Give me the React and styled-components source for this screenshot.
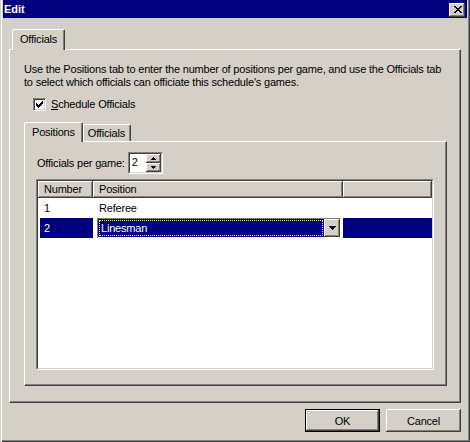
import React from "react";
import styled, { createGlobalStyle } from "styled-components";

const face = "#d4d0c8";
const shadow = "#808080";
const dark = "#404040";
const navy = "#000080";

const GlobalStyle = createGlobalStyle`
  html, body {
    margin: 0;
    padding: 0;
    background: ${face};
  }
  body {
    font-family: "Liberation Sans", Arial, sans-serif;
    font-size: 11px;
    letter-spacing: -0.2px;
    color: #000;
  }
`;

const raised = `
  box-shadow: inset -1px -1px ${dark}, inset 1px 1px #fff,
    inset -2px -2px ${shadow}, inset 2px 2px ${face};
`;

const Window = styled.div`
  width: 470px;
  height: 442px;
  box-sizing: border-box;
  padding: 0 3px 3px 3px;
  background: ${face};
  box-shadow: inset 1px 0 ${face}, inset 2px 0 #fff, inset -1px -1px ${dark},
    inset -2px -2px ${shadow};
  display: flex;
  flex-direction: column;
`;

const TitleBar = styled.div`
  height: 18px;
  flex: none;
  box-sizing: border-box;
  background: ${navy};
  color: #fff;
  display: flex;
  align-items: flex-end;
  justify-content: space-between;
  padding: 0 2px 1px 1px;
`;

const TitleText = styled.span`
  font-weight: bold;
  letter-spacing: 0;
  line-height: 13px;
  padding-bottom: 1px;
`;

const CloseButton = styled.div`
  width: 16px;
  height: 14px;
  background: ${face};
  ${raised}
  display: flex;
  align-items: center;
  justify-content: center;
  padding: 0 0 1px 1px;
  box-sizing: border-box;
`;

const Tabs = styled.div`
  display: flex;
  flex-direction: column;
  flex: ${(p) => (p.$grow ? 1 : "none")};
  margin: ${(p) => p.$margin || 0};
`;

const TabRow = styled.div`
  display: flex;
  align-items: flex-end;
  padding-left: ${(p) => p.$indent || 0}px;
`;

const Tab = styled.div`
  position: relative;
  z-index: ${(p) => (p.$active ? 1 : 0)};
  height: ${(p) => p.$h}px;
  margin-bottom: ${(p) => (p.$active ? -1 : 0)}px;
  padding: 0 ${(p) => (p.$active ? "7px 2px 7px" : "5px 0 4px")};
  box-sizing: border-box;
  background: ${face};
  border-top: 1px solid #fff;
  border-left: 1px solid #fff;
  border-right: 1px solid ${dark};
  box-shadow: inset -1px 0 ${shadow};
  border-radius: 2px 2px 0 0;
  display: flex;
  align-items: center;
  white-space: nowrap;
`;

const Panel = styled.div`
  flex: 1;
  display: flex;
  flex-direction: column;
  box-sizing: border-box;
  border-top: 1px solid #fff;
  border-left: 1px solid #fff;
  border-right: 1px solid ${dark};
  border-bottom: 1px solid ${dark};
  box-shadow: inset -1px -1px ${shadow};
  padding: ${(p) => p.$pad};
`;

const Intro = styled.p`
  margin: 0;
  line-height: 13px;
`;

const CheckRow = styled.label`
  display: flex;
  align-items: center;
  gap: 5px;
  margin: 9px 0 0 9px;
  line-height: 13px;
`;

const CheckBox = styled.span`
  width: 13px;
  height: 13px;
  box-sizing: border-box;
  border: 1px solid;
  border-color: ${shadow} #fff #fff ${shadow};
  box-shadow: inset 1px 1px ${dark}, inset -1px -1px ${face};
  background: #fff;
  display: flex;
  align-items: center;
  justify-content: center;
`;

const SpinRow = styled.div`
  display: flex;
  align-items: center;
  gap: 3px;
  padding-left: 1px;
`;

const SpinBox = styled.div`
  width: 35px;
  height: 22px;
  box-sizing: border-box;
  border: 1px solid;
  border-color: ${shadow} #fff #fff ${shadow};
  display: flex;
`;

const SpinInner = styled.div`
  flex: 1;
  display: flex;
  border: 1px solid;
  border-color: ${dark} ${face} ${face} ${dark};
  background: #fff;
`;

const SpinValue = styled.div`
  flex: 1;
  padding: 2px 0 0 2px;
  line-height: 13px;
`;

const SpinButtons = styled.div`
  width: 15px;
  display: flex;
  flex-direction: column;
`;

const SpinButton = styled.div`
  flex: 1;
  background: ${face};
  ${raised}
  display: flex;
  align-items: center;
  justify-content: center;
`;

const ListBox = styled.div`
  flex: 1;
  margin-top: 5px;
  display: flex;
  border: 1px solid;
  border-color: ${shadow} #fff #fff ${shadow};
`;

const ListView = styled.div`
  flex: 1;
  border: 1px solid;
  border-color: ${dark} ${face} ${face} ${dark};
  background: #fff;
`;

const columns = "55px 250px 1fr";

const HeaderRow = styled.div`
  display: grid;
  grid-template-columns: ${columns};
  height: 17px;
`;

const HeaderCell = styled.div`
  background: ${face};
  ${raised}
  padding: 0 6px;
  display: flex;
  align-items: center;
  line-height: 13px;
`;

const Row = styled.div`
  display: grid;
  grid-template-columns: ${columns};
  height: 20px;
`;

const Cell = styled.div`
  display: flex;
  align-items: center;
  padding: ${(p) => (p.$combo ? "0 2px 0 4px" : p.$selected && p.$first ? "0 4px" : "0 6px")};
  margin-left: ${(p) => (p.$selected && p.$first ? 2 : 0)}px;
  background: ${(p) => (p.$selected ? navy : "transparent")};
  color: ${(p) => (p.$selected ? "#fff" : "#000")};
`;

const Combo = styled.div`
  flex: 1;
  height: 20px;
  box-sizing: border-box;
  display: flex;
  border: 1px solid;
  border-color: ${shadow} #fff #fff ${shadow};
  background: ${navy};
`;

const ComboText = styled.div`
  flex: 1;
  margin: 1px;
  padding-left: 1px;
  border: 1px dotted #ffff00;
  color: #fff;
  display: flex;
  align-items: center;
`;

const ComboButton = styled.div`
  width: 16px;
  background: ${face};
  ${raised}
  display: flex;
  align-items: center;
  justify-content: center;
`;

const ButtonRow = styled.div`
  display: flex;
  justify-content: flex-end;
  gap: 6px;
  margin: 6px 6px 7px 0;
`;

const Button = styled.div`
  width: 75px;
  height: 23px;
  box-sizing: border-box;
  background: ${face};
  border: ${(p) => (p.$default ? "1px solid #000" : "none")};
  ${raised}
  display: flex;
  align-items: center;
  justify-content: center;
`;

const Pixels = ({ w, h, d }) => (
  <svg width={w} height={h} viewBox={`0 0 ${w} ${h}`} shapeRendering="crispEdges">
    <path d={d} fill="#000" />
  </svg>
);

const closeGlyph =
  "M0 0h2v1H0z M6 0h2v1H6z M1 1h2v1H1z M5 1h2v1H5z M2 2h4v1H2z M3 3h2v1H3z M2 4h4v1H2z M1 5h2v1H1z M5 5h2v1H5z M0 6h2v1H0z M6 6h2v1H6z";
const checkGlyph =
  "M6 0h1v1H6z M5 1h2v1H5z M0 2h1v1H0z M4 2h3v1H4z M0 3h2v1H0z M3 3h3v1H3z M0 4h5v1H0z M1 5h3v1H1z M2 6h1v1H2z";
const downArrow = "M0 0h7v1H0z M1 1h5v1H1z M2 2h3v1H2z M3 3h1v1H3z";
const spinUp = "M2 0h1v1H2z M1 1h3v1H1z M0 2h5v1H0z";
const spinDown = "M0 0h5v1H0z M1 1h3v1H1z M2 2h1v1H2z";

const positions = [
  { number: "1", name: "Referee" },
  { number: "2", name: "Linesman", selected: true },
];

export default function App() {
  return (
    <>
      <GlobalStyle />
      <Window>
        <TitleBar>
          <TitleText>Edit</TitleText>
          <CloseButton>
            <Pixels w={8} h={7} d={closeGlyph} />
          </CloseButton>
        </TitleBar>

        <Tabs $grow $margin="11px 6px 0 6px">
          <TabRow $indent={3}>
            <Tab $active $h={21}>Officials</Tab>
          </TabRow>
          <Panel $pad="13px 13px 16px 14px">
            <Intro>
              Use the Positions tab to enter the number of positions per game, and use the Officials tab
              <br />
              to select which officials can officiate this schedule's games.
            </Intro>
            <CheckRow>
              <CheckBox>
                <Pixels w={7} h={7} d={checkGlyph} />
              </CheckBox>
              <span>
                <u>S</u>chedule Officials
              </span>
            </CheckRow>

            <Tabs $grow $margin="11px 0 0 0">
              <TabRow>
                <Tab $active $h={20}>Positions</Tab>
                <Tab $h={17}>Officials</Tab>
              </TabRow>
              <Panel $pad="10px 12px 15px 11px">
                <SpinRow>
                  <span>Officials per game:</span>
                  <SpinBox>
                    <SpinInner>
                      <SpinValue>2</SpinValue>
                      <SpinButtons>
                        <SpinButton>
                          <Pixels w={5} h={3} d={spinUp} />
                        </SpinButton>
                        <SpinButton>
                          <Pixels w={5} h={3} d={spinDown} />
                        </SpinButton>
                      </SpinButtons>
                    </SpinInner>
                  </SpinBox>
                </SpinRow>

                <ListBox>
                  <ListView>
                    <HeaderRow>
                      <HeaderCell>Number</HeaderCell>
                      <HeaderCell>Position</HeaderCell>
                      <HeaderCell />
                    </HeaderRow>
                    {positions.map((p) => (
                      <Row key={p.number}>
                        <Cell $first $selected={p.selected}>{p.number}</Cell>
                        {p.selected ? (
                          <Cell $combo>
                            <Combo>
                              <ComboText>{p.name}</ComboText>
                              <ComboButton>
                                <Pixels w={7} h={4} d={downArrow} />
                              </ComboButton>
                            </Combo>
                          </Cell>
                        ) : (
                          <Cell>{p.name}</Cell>
                        )}
                        <Cell $selected={p.selected} />
                      </Row>
                    ))}
                  </ListView>
                </ListBox>
              </Panel>
            </Tabs>
          </Panel>
        </Tabs>

        <ButtonRow>
          <Button $default>OK</Button>
          <Button>Cancel</Button>
        </ButtonRow>
      </Window>
    </>
  );
}
